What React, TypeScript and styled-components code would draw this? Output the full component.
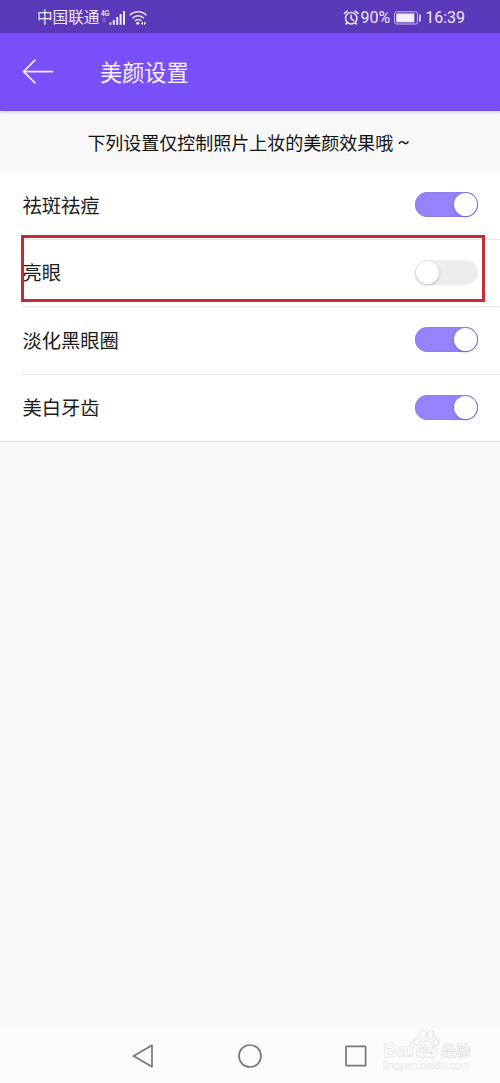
import React, { useState } from "react";
import styled, { createGlobalStyle } from "styled-components";

const GlobalStyle = createGlobalStyle`
  * { box-sizing: border-box; }
  body {
    margin: 0;
    background: #f9f9f9;
    color: #1c1c1c;
    font-family: Roboto, "Noto Sans CJK SC", sans-serif;
  }
`;

const Screen = styled.div`
  display: flex;
  flex-direction: column;
  width: 500px;
  height: 1083px;
  overflow: hidden;
  background: #f9f9f9;
`;

const StatusBar = styled.div`
  display: flex;
  align-items: center;
  justify-content: space-between;
  height: 33px;
  padding: 2px 35px 0 37px;
  background: #5a39b8;
  color: #eee8fb;
  flex: none;
`;

const StatusGroup = styled.div`
  display: flex;
  align-items: center;
`;

const Carrier = styled.span`
  font-size: 15.6px;
  line-height: 20px;
`;

const StatusText = styled.span<{ $gap?: number }>`
  font-size: 16px;
  line-height: 20px;
  margin-left: ${(p) => p.$gap ?? 0}px;
`;

const Network = styled.span`
  display: flex;
  flex-direction: column;
  align-items: flex-start;
  width: 8px;
  margin: -4px 0 0 2px;
  font: 700 9.5px/9px "Liberation Sans", sans-serif;
  transform: scaleX(0.68);
  transform-origin: left;
`;

const AppBar = styled.header`
  display: flex;
  align-items: center;
  height: 78px;
  padding-left: 22px;
  background: #794ff8;
  border-bottom: 1px solid #6b49d4;
  box-shadow: 0 1px 3px rgba(90, 60, 190, 0.28);
  color: #f7f2ff;
  flex: none;
  z-index: 1;
`;

const Title = styled.h1`
  margin: 2px 0 0 46px;
  font-size: 22.2px;
  line-height: 32px;
  font-weight: 400;
`;

const Hint = styled.p`
  display: flex;
  align-items: center;
  justify-content: center;
  height: 61px;
  margin: 0;
  padding-right: 3px;
  font-size: 18px;
  font-weight: 400;
  color: #111;
  background: #f8f8f8;
  flex: none;
`;

const Tilde = styled.span`
  margin-left: 4px;
`;

const List = styled.main`
  display: flex;
  flex-direction: column;
  background: #fff;
  border-bottom: 1px solid #dedede;
  flex: none;
`;

const Row = styled.div`
  position: relative;
  display: flex;
  align-items: center;
  justify-content: space-between;
  height: 67.5px;
  margin-left: 22px;
  padding-right: 22px;
  &:not(:last-child) {
    border-bottom: 1px solid #e6e6e6;
  }
  &:last-child {
    height: 66.5px;
  }
`;

const Label = styled.span`
  margin: 3px 0 0 0.5px;
  font-size: 19.3px;
  line-height: 28px;
`;

const Toggle = styled.button<{ $on: boolean }>`
  display: flex;
  align-items: center;
  justify-content: ${(p) => (p.$on ? "flex-end" : "flex-start")};
  width: 63px;
  height: 25px;
  margin-bottom: 0.6px;
  padding: 0 1px;
  border: 0;
  border-radius: 13px;
  background: ${(p) => (p.$on ? "#9682fb" : "#ededed")};
  box-shadow: ${(p) => (p.$on ? "inset 0 0 1px 0.5px #8c7bdf" : "none")};
`;

const Knob = styled.span`
  width: 23px;
  height: 23px;
  border-radius: 50%;
  background: #fff;
  box-shadow: 0 1px 3px rgba(0, 0, 0, 0.25);
`;

const Highlight = styled.div`
  position: absolute;
  left: -1px;
  top: -4.6px;
  width: 464px;
  height: 67px;
  border: 3px solid #c62b36;
  pointer-events: none;
`;

const NavBar = styled.nav`
  position: relative;
  display: flex;
  justify-content: center;
  align-items: center;
  gap: 82px;
  height: 54px;
  margin-top: auto;
  padding-right: 2px;
  background: #fcfcfc;
  flex: none;
`;

const Watermark = styled.div`
  position: absolute;
  left: 383px;
  top: -2px;
  width: 92px;
  display: flex;
  flex-direction: column;
  color: #fdfdfd;
  -webkit-text-stroke: 0.6px #dfdfdf;
`;

const Brand = styled.div`
  display: flex;
  align-items: flex-end;
  height: 34px;
  font: 700 20px/22px "Liberation Sans", sans-serif;
`;

const BrandCn = styled.span`
  margin-left: 1px;
  font: 700 14.8px/23px "Noto Sans CJK SC", sans-serif;
`;

const Site = styled.span`
  margin-top: -2px;
  font: 400 10.8px/13px "Liberation Sans", sans-serif;
  color: #fafafa;
  -webkit-text-stroke: 0.5px #ebebeb;
`;

const SignalIcon = () => (
  <svg width="17" height="16" viewBox="0 0 17 16" fill="#eee8fb">
    <rect x="0.4" y="12.5" width="2" height="2.3" />
    <rect x="3.8" y="10" width="2" height="4.8" />
    <rect x="7.2" y="7" width="2" height="7.8" />
    <rect x="10.6" y="4" width="2" height="10.8" />
    <rect x="14" y="1" width="2" height="13.8" />
  </svg>
);

const DataArrows = () => (
  <svg width="9" height="6" viewBox="0 0 7 6" fill="none" stroke="#9d86dd" strokeWidth="0.9">
    <path d="M2 5.5V.8L.7 2M4.6.5v4.7L6 4" />
  </svg>
);

const WifiSvg = styled.svg`
  margin-left: 3px;
`;

const WifiIcon = () => (
  <WifiSvg width="19" height="16" viewBox="0 0 19 16" fill="none" stroke="#eee8fb" strokeWidth="1.6">
    <path d="M.8 5.2C5.5.6 12.8.6 17.4 5.2M3.4 8.2c3.3-3.2 8.2-3.2 11.4 0M6 11c1.8-1.8 4.5-1.8 6.3 0" />
    <circle cx="8.7" cy="13.3" r="1.5" fill="#eee8fb" stroke="none" />
    <path d="m14 11.4-2.2 1.9 2.2 1.9zM15 11.4l2.2 1.9-2.2 1.9z" fill="#eee8fb" stroke="none" />
  </WifiSvg>
);

const AlarmIcon = () => (
  <svg width="16" height="16" viewBox="0 0 16 16" fill="none" stroke="#eee8fb" strokeWidth="1.5" strokeLinecap="round">
    <circle cx="8.2" cy="8.3" r="5.7" />
    <path d="M8.1 5.3v3.3l2.3 1.7M1.5 3.4 4.3 1.1M14.9 3.4l-2.8-2.3M4.3 12.6 3 14.1M12.1 12.6l1.3 1.5" />
  </svg>
);

const BatterySvg = styled.svg`
  margin-left: 4px;
`;

const BatteryIcon = () => (
  <BatterySvg width="28" height="14" viewBox="0 0 28 14" fill="none">
    <rect x=".6" y=".8" width="22.8" height="12.2" rx="1.8" stroke="#c9bdee" strokeWidth="1" />
    <rect x="2.3" y="2.5" width="18" height="8.8" fill="#f1edfb" />
    <rect x="25" y="3.5" width="1.7" height="7" rx=".6" fill="#eee8fb" />
  </BatterySvg>
);

const BackArrow = () => (
  <svg width="32" height="26" viewBox="0 0 32 26" fill="none" stroke="#f3ebff" strokeWidth="1.6" strokeLinecap="round" strokeLinejoin="round">
    <path d="M30.5 12.6h-29M13 1.1 1.5 12.6 13 23.9" />
  </svg>
);

const NavBack = () => (
  <svg width="24" height="26" viewBox="0 0 24 26" fill="none" stroke="#777" strokeWidth="1.7" strokeLinejoin="round">
    <path d="M2.6 13 21 2.3v21.4z" />
  </svg>
);

const NavHome = () => (
  <svg width="26" height="26" viewBox="0 0 26 26" fill="none" stroke="#777" strokeWidth="1.7">
    <circle cx="13" cy="13" r="11" />
  </svg>
);

const NavRecent = () => (
  <svg width="22" height="26" viewBox="0 0 22 26" fill="none" stroke="#777" strokeWidth="1.7" strokeLinejoin="round">
    <rect x="1" y="3.3" width="19.6" height="19.4" rx=".7" />
  </svg>
);

const PawMark = styled.span`
  position: relative;
  display: inline-flex;
  justify-content: center;
  width: 27px;
  height: 30px;
  margin: 0 0 2px -1px;
  svg {
    position: absolute;
    left: 0;
    top: 0;
  }
`;

const PawText = styled.span`
  position: relative;
  margin-top: 12px;
  font: 700 12px/18px "Liberation Sans", sans-serif;
`;

const Paw = () => (
  <PawMark>
    <svg width="27" height="30" viewBox="0 0 27 30" fill="#fdfdfd" stroke="#dcdcdc" strokeWidth=".9">
      <ellipse cx="4" cy="12.5" rx="3" ry="4" transform="rotate(-15 4 12.5)" />
      <ellipse cx="10" cy="5.3" rx="3.1" ry="4.4" />
      <ellipse cx="17.8" cy="5.6" rx="3.1" ry="4.4" transform="rotate(12 17.8 5.6)" />
      <ellipse cx="23" cy="13.2" rx="2.9" ry="4" transform="rotate(15 23 13.2)" />
      <path d="M13.6 12c-4 0-4.4 4-7.8 7-3.5 3-3 8.6 1.4 9.4 3 .4 4-.5 6.4-.5s4 .9 7 .4c4.4-.8 4.6-6.2 1.4-9.2-3.4-3.1-4.4-7.1-8.4-7.1z" />
    </svg>
    <PawText>du</PawText>
  </PawMark>
);

const initialSettings = [
  { name: "祛斑祛痘", on: true },
  { name: "亮眼", on: false, highlighted: true },
  { name: "淡化黑眼圈", on: true },
  { name: "美白牙齿", on: true },
];

export default function App() {
  const [settings, setSettings] = useState(initialSettings);
  const flip = (name: string) =>
    setSettings((all) => all.map((s) => (s.name === name ? { ...s, on: !s.on } : s)));

  return (
    <Screen>
      <GlobalStyle />
      <StatusBar>
        <StatusGroup>
          <Carrier>中国联通</Carrier>
          <Network>
            4G
            <DataArrows />
          </Network>
          <SignalIcon />
          <WifiIcon />
        </StatusGroup>
        <StatusGroup>
          <AlarmIcon />
          <StatusText $gap={1}>90%</StatusText>
          <BatteryIcon />
          <StatusText $gap={3}>16:39</StatusText>
        </StatusGroup>
      </StatusBar>
      <AppBar>
        <BackArrow />
        <Title>美颜设置</Title>
      </AppBar>
      <Hint>
        下列设置仅控制照片上妆的美颜效果哦<Tilde>~</Tilde>
      </Hint>
      <List>
        {settings.map((s) => (
          <Row key={s.name}>
            <Label>{s.name}</Label>
            <Toggle $on={s.on} aria-label={s.name} onClick={() => flip(s.name)}>
              <Knob />
            </Toggle>
            {s.highlighted && <Highlight />}
          </Row>
        ))}
      </List>
      <NavBar>
        <NavBack />
        <NavHome />
        <NavRecent />
        <Watermark>
          <Brand>
            Bai
            <Paw />
            <BrandCn>经验</BrandCn>
          </Brand>
          <Site>jingyan.baidu.com</Site>
        </Watermark>
      </NavBar>
    </Screen>
  );
}
